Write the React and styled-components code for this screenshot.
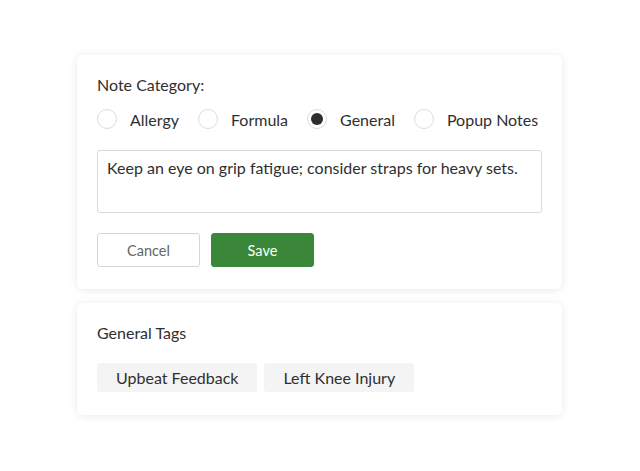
import styled, { createGlobalStyle } from "styled-components";

const GlobalStyle = createGlobalStyle`
  body {
    margin: 0;
    background: #ffffff;
    font-family: "Lato", "Liberation Sans", sans-serif;
    color: #2b2b2b;
  }
`;

const categories = ["Allergy", "Formula", "General", "Popup Notes"];
const tags = ["Upbeat Feedback", "Left Knee Injury"];

const App = () => {
  return (
    <Page>
      <GlobalStyle />
      <Card>
        <Label>Note Category:</Label>
        <RadioRow>
          {categories.map((c) => (
            <RadioItem key={c}>
              <Circle $checked={c === "General"} />
              <span>{c}</span>
            </RadioItem>
          ))}
        </RadioRow>
        <NoteBox defaultValue="Keep an eye on grip fatigue; consider straps for heavy sets." />
        <ButtonRow>
          <Button>Cancel</Button>
          <Button $primary>Save</Button>
        </ButtonRow>
      </Card>
      <Card $bottom={23}>
        <Label>General Tags</Label>
        <TagRow>
          {tags.map((t) => (
            <Tag key={t}>{t}</Tag>
          ))}
        </TagRow>
      </Card>
    </Page>
  );
};

export default App;

const Page = styled.div`
  width: 485px;
  margin-left: 77px;
  padding: 55px 0 40px;
  display: flex;
  flex-direction: column;
  gap: 14px;
`;

const Card = styled.div`
  background: #fff;
  border-radius: 6px;
  box-shadow: 0 1px 10px rgba(0, 0, 0, 0.09);
  padding: 21px 20px ${(p) => p.$bottom || 22}px;
`;

const Label = styled.div`
  font-size: 16px;
  line-height: 18px;
  color: #2f2f2f;
`;

const RadioRow = styled.div`
  display: flex;
  align-items: center;
  gap: 19px;
  margin-top: 14px;
  height: 22px;
`;

const RadioItem = styled.label`
  display: flex;
  align-items: center;
  gap: 13px;
  font-size: 16px;
  color: #2f2f2f;
`;

const Circle = styled.span`
  width: 20px;
  height: 20px;
  box-sizing: border-box;
  border-radius: 50%;
  border: 1px solid #dcdcdc;
  position: relative;
  &::after {
    content: "";
    display: ${(p) => (p.$checked ? "block" : "none")};
    position: absolute;
    inset: 3px;
    border-radius: 50%;
    background: #2d2d2d;
  }
`;

const NoteBox = styled.textarea`
  display: block;
  box-sizing: border-box;
  width: 100%;
  height: 63px;
  margin-top: 20px;
  padding: 7px 9px;
  border: 1px solid #d9d9d9;
  border-radius: 3px;
  resize: none;
  font-family: inherit;
  font-size: 16px;
  line-height: 20px;
  color: #2f2f2f;
`;

const ButtonRow = styled.div`
  display: flex;
  gap: 11px;
  margin-top: 20px;
`;

const Button = styled.button`
  width: 103px;
  height: 34px;
  box-sizing: border-box;
  border-radius: 3px;
  font-family: inherit;
  font-size: 14.5px;
  border: 1px solid ${(p) => (p.$primary ? "#3a873a" : "#d6d6d6")};
  background: ${(p) => (p.$primary ? "#3a873a" : "#fff")};
  color: ${(p) => (p.$primary ? "#fff" : "#666")};
`;

const TagRow = styled.div`
  display: flex;
  gap: 7px;
  margin-top: 21px;
`;

const Tag = styled.div`
  height: 29px;
  display: flex;
  align-items: center;
  padding: 0 19px;
  background: #f4f4f4;
  border-radius: 3px;
  font-size: 16px;
  color: #2f2f2f;
`;
